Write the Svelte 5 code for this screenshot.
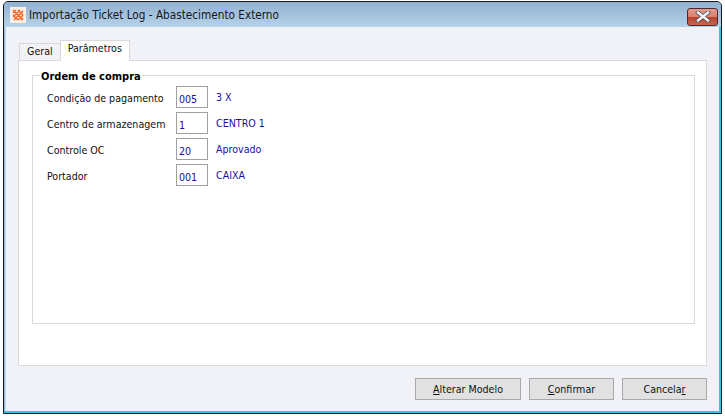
<script lang="ts">
// linhas do grupo "Ordem de compra"
const rows = [
	{ label: 'Condição de pagamento', code: '005', desc: '3 X' },
	{ label: 'Centro de armazenagem', code: '1', desc: 'CENTRO 1' },
	{ label: 'Controle OC', code: '20', desc: 'Aprovado' },
	{ label: 'Portador', code: '001', desc: 'CAIXA' }
];
</script>

<div class="window">
	<div class="titlebar">
		<svg class="app-icon" width="16" height="16" viewBox="0 0 16 16">
			<rect width="16" height="16" fill="#f8efe9" />
			<path d="M3 6 L6 3 M3 10 L10 3 M4 13 L13 4 M8 13 L13 8 M11 13 L13 11 M3 3 L13 13 M3 8 L8 13 M8 3 L13 8" stroke="#f0682a" stroke-width="1.6" fill="none" />
		</svg>
		<span class="title">Importação Ticket Log - Abastecimento Externo</span>
		<div class="close">
			<svg width="16" height="11" viewBox="0 0 16 11">
				<path d="M3 1.5 L13 9.5 M13 1.5 L3 9.5" stroke="#4b5058" stroke-width="4" stroke-linecap="square" />
				<path d="M3 1.5 L13 9.5 M13 1.5 L3 9.5" stroke="#f2f3f5" stroke-width="2.4" stroke-linecap="square" />
			</svg>
		</div>
	</div>
	<div class="body">
		<div class="tabs">
			<div class="tab">Geral</div>
			<div class="tab active">Parâmetros</div>
		</div>
		<div class="panel">
			<fieldset class="group">
				<legend>Ordem de compra</legend>
				{#each rows as row}
					<div class="row">
						<span class="label">{row.label}</span>
						<span class="code">{row.code}</span>
						<span class="desc">{row.desc}</span>
					</div>
				{/each}
			</fieldset>
		</div>
		<div class="actions">
			<button class="wide"><u>A</u>lterar Modelo</button>
			<button><u>C</u>onfirmar</button>
			<button>Cancela<u>r</u></button>
		</div>
	</div>
</div>

<style>
	:global(body) {
		background: #fff;
	}

	.window {
		box-sizing: border-box;
		width: 719px;
		height: 413px;
		margin: 1px 0 0 3px;
		border: 1px solid #16181c;
		border-radius: 5px 5px 0 0;
		background: #9fbedb;
		display: flex;
		flex-direction: column;
		font-family: 'DejaVu Sans', sans-serif;
		font-stretch: condensed;
		font-size: 10.6px;
		color: #111;
		box-shadow: inset -2px -2px 0 #38c2ea;
	}

	.titlebar {
		height: 25px;
		flex: none;
		display: flex;
		align-items: center;
		padding: 0 3px 0 6px;
		background: linear-gradient(#92b1d0, #b6d2ea);
		border-radius: 4px 4px 0 0;
	}

	.app-icon {
		margin-right: 3px;
	}

	.title {
		font-size: 11.7px;
		color: #14161a;
	}

	.close {
		box-sizing: border-box;
		margin-left: auto;
		width: 31px;
		height: 18px;
		margin-top: 4px;
		display: flex;
		align-items: center;
		justify-content: center;
		border: 1px solid #4a2a3a;
		border-radius: 3px;
		background: linear-gradient(#e79a8a 0, #d98070 48%, #b8412a 52%, #c46a50 100%);
	}

	.body {
		flex: 1;
		margin: 0 2px 2px 1px;
		padding: 13px 12px 0 12px;
		background: #f1f2f8;
		display: flex;
		flex-direction: column;
		border-left: 1px solid #c5d6ea;
	}

	.tabs {
		display: flex;
		align-items: flex-end;
		height: 20px;
		padding-left: 1px;
		flex: none;
	}

	.tab {
		box-sizing: border-box;
		height: 17px;
		padding: 1px 7px 0;
		background: #f1f2f6;
		border: 1px solid #d9d9d9;
		border-bottom: none;
	}

	.tab.active {
		height: 21px;
		margin-left: -1px;
		padding: 1px 7px 0;
		background: #fff;
		position: relative;
		top: 1px;
		z-index: 1;
	}

	.panel {
		box-sizing: border-box;
		height: 306px;
		flex: none;
		background: #fff;
		border: 1px solid #d9d9d9;
		padding: 7px 11px 0 13px;
	}

	.group {
		box-sizing: border-box;
		height: 256px;
		margin: 0;
		padding: 0 0 0 14px;
		border: 1px solid #d9d9d9;
	}

	legend {
		padding: 2px 1px 0;
		margin-left: -7px;
		font-weight: bold;
		font-size: 11px;
		color: #000;
		line-height: 13px;
	}

	.row {
		display: flex;
		align-items: center;
		height: 22px;
		margin-bottom: 4px;
	}

	.row:first-of-type {
		margin-top: 3px;
	}

	.label {
		width: 129px;
		flex: none;
		padding-top: 2px;
	}

	.code {
		box-sizing: border-box;
		width: 32px;
		height: 22px;
		flex: none;
		border: 1px solid #a0a0a0;
		background: #fff;
		color: #1a0fa0;
		padding: 5px 0 0 2px;
		line-height: 15px;
	}

	.desc {
		margin-left: 8px;
		color: #1a0fa0;
	}

	.actions {
		display: flex;
		justify-content: flex-end;
		gap: 8px;
		margin-top: 12px;
	}

	button {
		box-sizing: border-box;
		width: 85px;
		height: 22px;
		padding: 0;
		border: 1px solid #a9a9a9;
		background: #e1e1e1;
		font: inherit;
		font-stretch: condensed;
		color: #111;
	}

	button.wide {
		width: 106px;
	}
</style>
